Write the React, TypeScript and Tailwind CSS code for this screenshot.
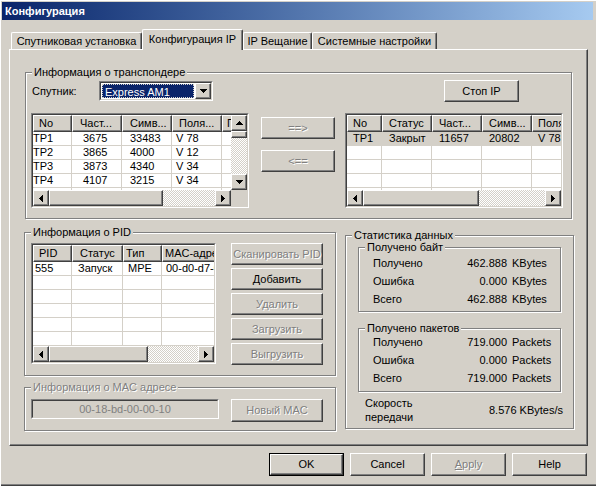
import React from "react";

// Classic Windows 2000 style dialog: "Конфигурация" / tab "Конфигурация IP"

const dis = "text-[#808080] [text-shadow:1px_1px_0_#fff]";
const raised =
  "border border-t-white border-l-white border-r-[#404040] border-b-[#404040] shadow-[inset_-1px_-1px_0_#808080]";
const track =
  "bg-[image:repeating-conic-gradient(#fff_0%_25%,#d4d0c8_0%_50%)] bg-[length:2px_2px]";

type Dir = "up" | "down" | "left" | "right";

const Tri = ({ dir }: { dir: Dir }) => {
  if (dir === "up" || dir === "down")
    return (
      <svg width="7" height="4" viewBox="0 0 7 4" shapeRendering="crispEdges">
        <polygon points={dir === "up" ? "3.5,0 7,4 0,4" : "0,0 7,0 3.5,4"} fill="#000" />
      </svg>
    );
  return (
    <svg width="4" height="7" viewBox="0 0 4 7" shapeRendering="crispEdges">
      <polygon points={dir === "left" ? "4,0 4,7 0,3.5" : "0,0 4,3.5 0,7"} fill="#000" />
    </svg>
  );
};

const Arrow = ({ dir }: { dir: Dir }) => (
  <div className={`w-[16px] h-[16px] shrink-0 bg-[#d4d0c8] flex items-center justify-center ${raised}`}>
    <Tri dir={dir} />
  </div>
);

const Btn = ({
  children,
  className = "",
  disabled = false,
  def = false,
}: {
  children: React.ReactNode;
  className?: string;
  disabled?: boolean;
  def?: boolean;
}) => (
  <div className={`${def ? "border border-black" : ""} ${className}`}>
    <div className={`h-full flex items-center justify-center whitespace-nowrap ${raised} ${disabled ? dis : "text-black"}`}>
      {children}
    </div>
  </div>
);

const Group = ({
  label,
  className = "",
  disabled = false,
  children,
}: {
  label: string;
  className?: string;
  disabled?: boolean;
  children?: React.ReactNode;
}) => (
  <div className={`shrink-0 border border-[#808080] shadow-[inset_1px_1px_0_#fff,1px_1px_0_#fff] ${className}`}>
    <div className={`-mt-[7px] ml-[6px] w-fit px-[2px] bg-[#d4d0c8] leading-[13px] whitespace-nowrap ${disabled ? dis : ""}`}>
      {label}
    </div>
    {children}
  </div>
);

type Col = { t: string; w: string; hp: string; cp: string };

const ListView = ({
  cols,
  rows,
  nRows,
  size,
  thumb,
  vscroll = false,
  sel = -1,
}: {
  cols: Col[];
  rows: string[][];
  nRows: number;
  size: string;
  thumb: string;
  vscroll?: boolean;
  sel?: number;
}) => (
  <div className={`shrink-0 border border-t-[#808080] border-l-[#808080] border-r-white border-b-white ${size}`}>
    <div className="h-full flex bg-white border border-t-[#404040] border-l-[#404040] border-r-[#d4d0c8] border-b-[#d4d0c8]">
      <div className="flex-1 min-w-0 flex flex-col">
        <div className="flex h-[17px] shrink-0 overflow-hidden">
          {cols.map((c, i) => (
            <div key={i} className={`${c.w} shrink-0 bg-[#d4d0c8] leading-[15px] whitespace-nowrap overflow-hidden ${raised} ${c.hp}`}>
              {c.t}
            </div>
          ))}
        </div>
        <div className="flex-1 overflow-hidden">
          {Array.from({ length: nRows }).map((_, r) => (
            <div key={r} className={`flex h-[14px] w-max border-b border-[#d4d0c8] ${r === sel ? "bg-[#d4d0c8]" : ""}`}>
              {cols.map((c, i) => (
                <div key={i} className={`${c.w} shrink-0 leading-[13px] whitespace-nowrap overflow-hidden border-r border-[#d4d0c8] ${c.cp}`}>
                  {rows[r] ? rows[r][i] : ""}
                </div>
              ))}
            </div>
          ))}
        </div>
        <div className="flex h-[16px] shrink-0">
          <Arrow dir="left" />
          <div className={`${thumb} shrink-0 bg-[#d4d0c8] ${raised}`} />
          <div className={`flex-1 ${track}`} />
          <Arrow dir="right" />
        </div>
      </div>
      {vscroll && (
        <div className="w-[16px] shrink-0 flex flex-col">
          <Arrow dir="up" />
          <div className={`h-[7px] shrink-0 bg-[#d4d0c8] ${raised}`} />
          <div className={`flex-1 ${track}`} />
          <Arrow dir="down" />
          <div className="h-[16px] shrink-0 bg-[#d4d0c8]" />
        </div>
      )}
    </div>
  </div>
);

const leftCols: Col[] = [
  { t: "No", w: "w-[39px]", hp: "pl-[5px]", cp: "pl-[0px]" },
  { t: "Част...", w: "w-[50px]", hp: "pl-[7px]", cp: "pl-[11px]" },
  { t: "Симв...", w: "w-[50px]", hp: "pl-[7px]", cp: "pl-[8px]" },
  { t: "Поля...", w: "w-[50px]", hp: "pl-[6px]", cp: "pl-[4px]" },
  { t: "Поляризация", w: "w-[60px]", hp: "pl-[4px]", cp: "pl-[4px]" },
];
const leftRows = [
  ["TP1", "3675", "33483", "V 78", ""],
  ["TP2", "3865", "4000", "V 12", ""],
  ["TP3", "3873", "4340", "V 34", ""],
  ["TP4", "4107", "3215", "V 34", ""],
];

const rightCols: Col[] = [
  { t: "No", w: "w-[35px]", hp: "pl-[5px]", cp: "pl-[6px]" },
  { t: "Статус", w: "w-[50px]", hp: "pl-[6px]", cp: "pl-[7px]" },
  { t: "Част...", w: "w-[50px]", hp: "pl-[6px]", cp: "pl-[7px]" },
  { t: "Симв...", w: "w-[50px]", hp: "pl-[6px]", cp: "pl-[7px]" },
  { t: "Поляризация", w: "w-[60px]", hp: "pl-[5px]", cp: "pl-[6px]" },
];
const rightRows = [["TP1", "Закрыт", "11657", "20802", "V 78"]];

const pidCols: Col[] = [
  { t: "PID", w: "w-[39px]", hp: "pl-[5px]", cp: "pl-[2px]" },
  { t: "Статус", w: "w-[51px]", hp: "pl-[7px]", cp: "pl-[6px]" },
  { t: "Тип", w: "w-[39px]", hp: "pl-[2px]", cp: "pl-[5px]" },
  { t: "MAC-адрес", w: "w-[100px]", hp: "pl-[2px]", cp: "pl-[4px]" },
];
const pidRows = [["555", "Запуск", "MPE", "00-d0-d7-00-00-01"]];

const StatRow = ({ label, value, unit }: { label: string; value: string; unit: string }) => (
  <div className="flex items-center h-[18px]">
    <div className="pl-[14px] w-[94px]">{label}</div>
    <div className="w-[54px] text-right">{value}</div>
    <div className="ml-[5px]">{unit}</div>
  </div>
);

const Tab = ({ label, w, active = false }: { label: string; w: string; active?: boolean }) => (
  <div
    className={`${w} shrink-0 flex items-center justify-center bg-[#d4d0c8] rounded-t-[2px] border-t border-l border-t-white border-l-white border-r border-r-[#404040] shadow-[inset_-1px_0_0_#808080] ${
      active ? "h-[21px] -mb-[1px] relative z-10 pb-[2px]" : "h-[17px]"
    }`}
  >
    {label}
  </div>
);

export default function App() {
  return (
    <div className="w-[596px] h-[486px] overflow-hidden bg-[#d4d0c8] pl-[2px] pt-[2px] pr-[3px] text-[11px] leading-[13px] text-black font-['Liberation_Sans',Arial,sans-serif] shadow-[inset_1px_1px_0_#fff,inset_0_-1px_0_#404040,inset_0_-2px_0_#808080]">
      {/* Title bar */}
      <div className="h-[18px] bg-linear-to-r from-[#0a246a] to-[#a6caf0] pl-[3px] text-white font-bold leading-[18px]">
        Конфигурация
      </div>

      {/* Tabs */}
      <div className="mt-[8px] ml-[9px] h-[21px] flex items-end">
        <Tab label="Спутниковая установка" w="w-[131px]" />
        <Tab label="Конфигурация IP" w="w-[101px]" active />
        <Tab label="IP Вещание" w="w-[69px]" />
        <Tab label="Системные настройки" w="w-[125px]" />
      </div>

      {/* Tab panel */}
      <div className="ml-[7px] w-[579px] h-[397px] border border-t-white border-l-white border-r-[#404040] border-b-[#404040] shadow-[inset_-1px_-1px_0_#808080] flex flex-col">
        <Group label="Информация о транспондере" className="mt-[22px] ml-[15px] w-[547px] h-[147px]">
          <div className="mt-[1px] h-[22px] flex items-center">
            <div className="ml-[6px] w-[67px]">Спутник:</div>
            <div className="w-[114px] h-[20px] border border-t-[#808080] border-l-[#808080] border-r-white border-b-white">
              <div className="h-full flex bg-white border border-t-[#404040] border-l-[#404040] border-r-[#d4d0c8] border-b-[#d4d0c8]">
                <div className="flex-1 m-[1px] bg-[#0a246a] text-white pl-[2px] leading-[14px] border border-dotted border-[#d4d0c8]">
                  Express AM1
                </div>
                <Arrow dir="down" />
              </div>
            </div>
            <Btn className="ml-[231px] w-[75px] h-[22px]">Стоп IP</Btn>
          </div>

          <div className="mt-[11px] flex items-start">
            <div className="ml-[5px]">
              <ListView cols={leftCols} rows={leftRows} nRows={5} size="w-[218px] h-[95px]" thumb="w-[114px]" vscroll />
            </div>
            <div className="ml-[12px] w-[74px] flex flex-col">
              <Btn className="mt-[4px] h-[22px]" disabled>
                ==&gt;
              </Btn>
              <Btn className="mt-[11px] h-[22px]" disabled>
                &lt;==
              </Btn>
            </div>
            <div className="ml-[10px]">
              <ListView cols={rightCols} rows={rightRows} nRows={5} size="w-[218px] h-[95px]" thumb="w-[116px]" sel={0} />
            </div>
          </div>
        </Group>

        <div className="mt-[13px] ml-[14px] flex items-start">
          <div className="flex flex-col">
            <Group label="Информация о PID" className="w-[312px] h-[144px]">
              <div className="mt-[4px] flex items-start">
                <div className="ml-[6px]">
                  <ListView cols={pidCols} rows={pidRows} nRows={7} size="w-[185px] h-[121px]" thumb="w-[99px]" />
                </div>
                <div className="ml-[15px] w-[92px] flex flex-col gap-[3px]">
                  <Btn className="h-[22px]" disabled>
                    Сканировать PID
                  </Btn>
                  <Btn className="h-[22px]">Добавить</Btn>
                  <Btn className="h-[22px]" disabled>
                    Удалить
                  </Btn>
                  <Btn className="h-[22px]" disabled>
                    Загрузить
                  </Btn>
                  <Btn className="h-[22px]" disabled>
                    Выгрузить
                  </Btn>
                </div>
              </div>
            </Group>

            <Group label="Информация о MAC адресе" disabled className="mt-[11px] w-[312px] h-[44px]">
              <div className="mt-[5px] flex items-start">
                <div className="ml-[6px] w-[188px] h-[20px] border border-t-[#808080] border-l-[#808080] border-r-white border-b-white">
                  <div className="h-full flex items-center justify-center text-[#808080] border border-t-[#404040] border-l-[#404040] border-r-[#d4d0c8] border-b-[#d4d0c8]">
                    00-18-bd-00-00-10
                  </div>
                </div>
                <Btn className="ml-[12px] w-[92px] h-[23px]" disabled>
                  Новый MAC
                </Btn>
              </div>
            </Group>
          </div>

          <Group label="Статистика данных" className="ml-[9px] mt-[3px] w-[229px] h-[194px]">
            <Group label="Получено байт" className="mt-[5px] ml-[12px] w-[203px] h-[65px]">
              <StatRow label="Получено" value="462.888" unit="KBytes" />
              <StatRow label="Ошибка" value="0.000" unit="KBytes" />
              <StatRow label="Всего" value="462.888" unit="KBytes" />
            </Group>
            <Group label="Получено пакетов" className="mt-[16px] ml-[12px] w-[203px] h-[64px]">
              <div className="-mt-[2px]">
                <StatRow label="Получено" value="719.000" unit="Packets" />
                <StatRow label="Ошибка" value="0.000" unit="Packets" />
                <StatRow label="Всего" value="719.000" unit="Packets" />
              </div>
            </Group>
            <div className="mt-[4px] flex items-center">
              <div className="ml-[19px] leading-[14px]">
                Скорость
                <br />
                передачи
              </div>
              <div className="ml-auto mr-[10px]">8.576 KBytes/s</div>
            </div>
          </Group>
        </div>
      </div>

      {/* Dialog buttons */}
      <div className="mt-[7px] ml-[267px] flex gap-[6px]">
        <Btn className="w-[75px] h-[23px]" def>
          OK
        </Btn>
        <Btn className="w-[75px] h-[23px]">Cancel</Btn>
        <Btn className="w-[75px] h-[23px]" disabled>
          <span>
            <span className="underline">A</span>pply
          </span>
        </Btn>
        <Btn className="w-[75px] h-[23px]">Help</Btn>
      </div>
    </div>
  );
}
